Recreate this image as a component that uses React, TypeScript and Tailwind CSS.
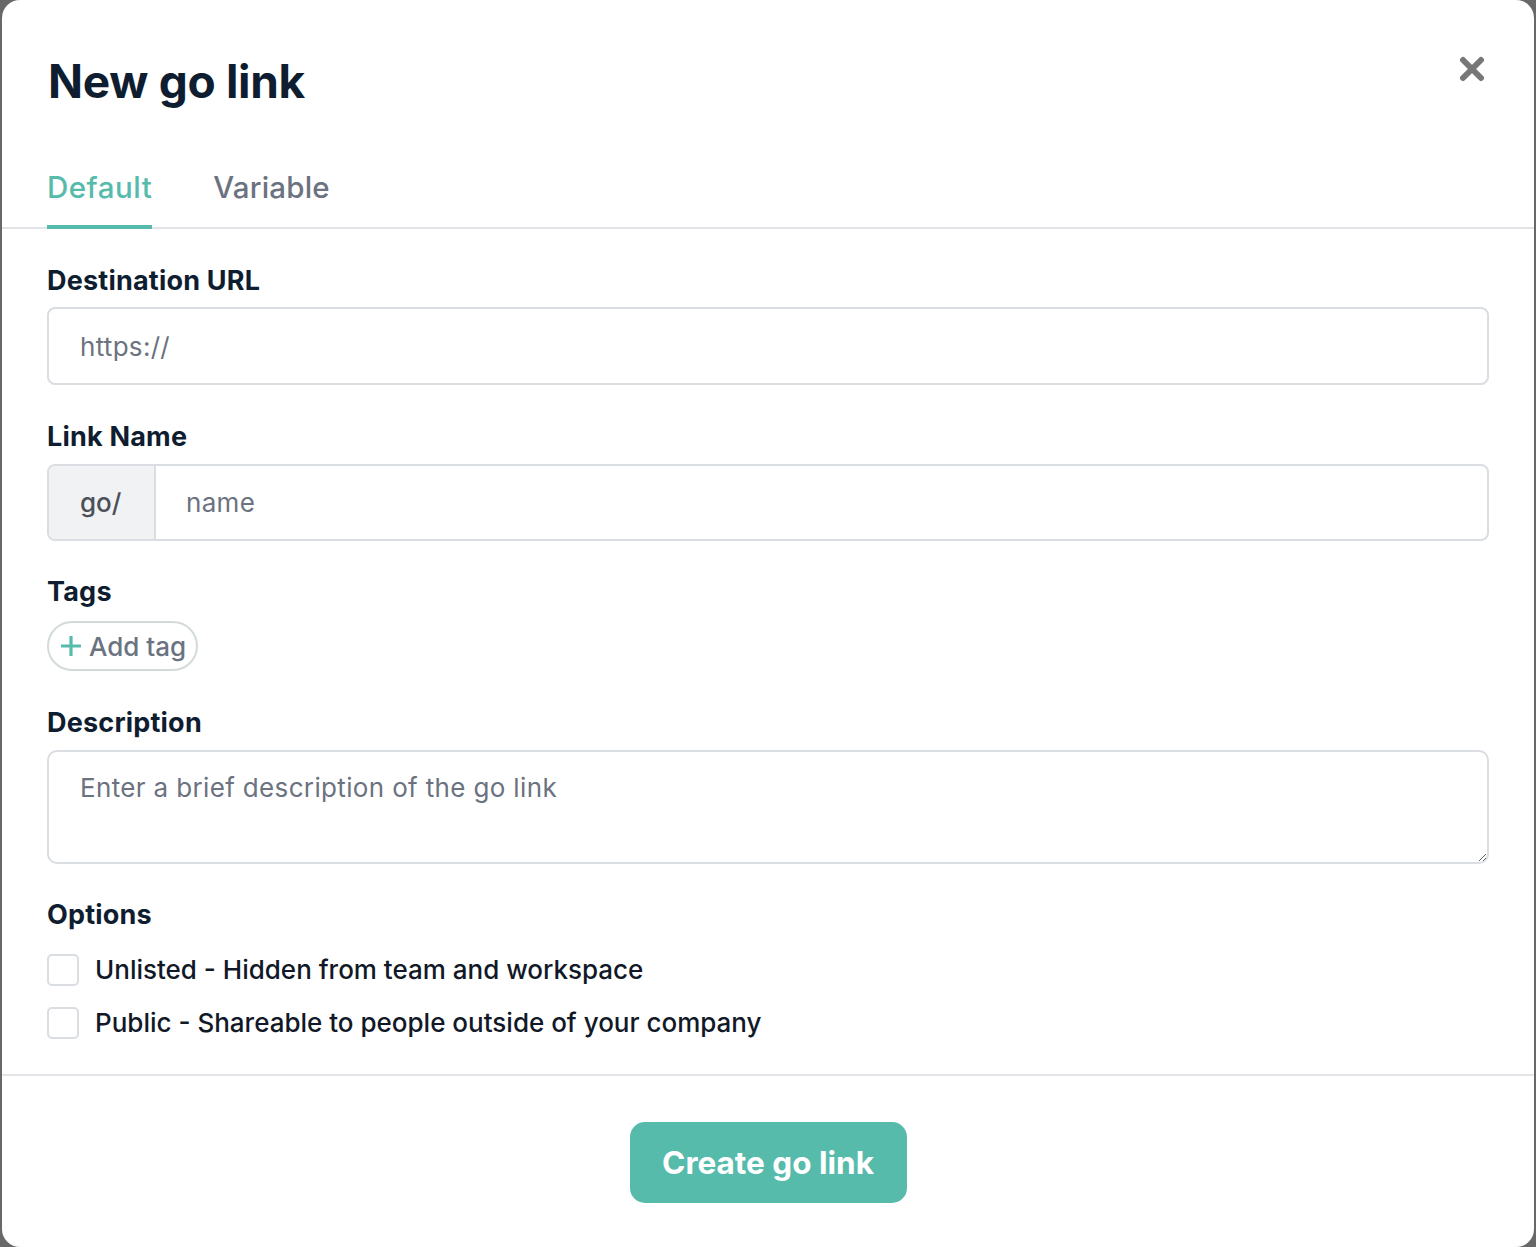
import React from 'react';

const FONT = "font-['Inter','Noto_Sans',sans-serif]";

function CloseIcon() {
  return (
    <svg width="26" height="26" viewBox="0 0 26 26" aria-hidden>
      <line x1="4" y1="4" x2="22" y2="22" stroke="#777777" strokeWidth="6" strokeLinecap="round" />
      <line x1="22" y1="4" x2="4" y2="22" stroke="#777777" strokeWidth="6" strokeLinecap="round" />
    </svg>
  );
}

function FieldLabel({ children }: { children: React.ReactNode }) {
  return (
    <label className="block text-[27px] leading-[32px] font-bold text-[#0f1d30] tracking-[0.2px]">
      {children}
    </label>
  );
}

function Option({ label }: { label: string }) {
  return (
    <label className="flex items-center gap-[16px]">
      <span className="w-[32px] h-[32px] rounded-[5px] border-2 border-[#dadde1] bg-white shrink-0" />
      <span className="text-[26px] leading-[32px] font-medium text-[#111827]">{label}</span>
    </label>
  );
}

export default function App() {
  return (
    <div className={`${FONT} bg-[#686868] h-[1247px] w-full`}>
      <div className="mx-[2px] h-full bg-white rounded-[18px] flex flex-col overflow-hidden">
        {/* Header */}
        <div className="flex justify-between items-start pl-[46px] pr-[48px] pt-[53px]">
          <h1 className="text-[46px] leading-[56px] font-bold text-[#0f1d30] tracking-[-0.3px]">New go link</h1>
          <button className="mt-[3px] mr-[1px]">
            <CloseIcon />
          </button>
        </div>

        {/* Tabs */}
        <div className="mt-[60px] flex gap-[61px] px-[45px] border-b-2 border-[#e3e3e8]">
          <button className="-mb-[2px] pb-[20px] border-b-4 border-[#57bbac] text-[29.5px] leading-[36px] font-medium text-[#57bbac] tracking-[0.5px]">
            Default
          </button>
          <button className="-mb-[2px] pb-[20px] border-b-4 border-transparent text-[29.5px] leading-[36px] font-medium text-[#6b7280] tracking-[0.2px]">
            Variable
          </button>
        </div>

        {/* Body */}
        <div className="px-[45px] pt-[36px] flex flex-col">
          <FieldLabel>Destination URL</FieldLabel>
          <input
            className="mt-[10px] h-[78px] w-full rounded-[8px] border-2 border-[#dadde1] px-[31px] text-[26px] tracking-[0.3px] text-[#111827] placeholder:text-[#6b7280] outline-none"
            placeholder="https://"
          />

          <div className="mt-[36px]">
            <FieldLabel>Link Name</FieldLabel>
          </div>
          <div className="mt-[11px] h-[77px] flex rounded-[8px] border-2 border-[#dadde1] overflow-hidden">
            <span className="w-[107px] shrink-0 flex items-center pl-[31px] bg-[#f1f2f4] border-r-2 border-[#dadde1] text-[26px] font-medium text-[#4b5058]">
              go/
            </span>
            <input
              className="flex-1 px-[30px] text-[26px] tracking-[0.3px] text-[#111827] placeholder:text-[#6b7280] outline-none"
              placeholder="name"
            />
          </div>

          <div className="mt-[35px]">
            <FieldLabel>Tags</FieldLabel>
          </div>
          <div className="mt-[13px]">
            <button className="h-[50px] w-[151px] flex items-center gap-[8px] pl-[12px] rounded-full border-2 border-[#d3dbd9] text-[26px] font-medium text-[#6b7280]">
              <svg width="20" height="20" viewBox="0 0 20 20" aria-hidden>
                <line x1="10" y1="1" x2="10" y2="19" stroke="#57bbac" strokeWidth="3.2" strokeLinecap="round" />
                <line x1="1" y1="10" x2="19" y2="10" stroke="#57bbac" strokeWidth="3.2" strokeLinecap="round" />
              </svg>
              Add tag
            </button>
          </div>

          <div className="mt-[36px]">
            <FieldLabel>Description</FieldLabel>
          </div>
          <textarea
            className="mt-[11px] h-[114px] w-full rounded-[10px] border-2 border-[#dadde1] px-[31px] pt-[20px] text-[26px] leading-[32px] tracking-[0.35px] text-[#111827] placeholder:text-[#6b7280] outline-none"
            placeholder="Enter a brief description of the go link"
          />

          <div className="mt-[35px]">
            <FieldLabel>Options</FieldLabel>
          </div>
          <div className="mt-[23px] flex flex-col gap-[21px]">
            <Option label="Unlisted - Hidden from team and workspace" />
            <Option label="Public - Shareable to people outside of your company" />
          </div>
        </div>

        {/* Footer */}
        <div className="mt-[35px] border-t-2 border-[#e3e3e8] flex justify-center pt-[46px]">
          <button className="h-[81px] w-[277px] rounded-[15px] bg-[#57bbac] text-white text-[31.5px] font-bold">
            Create go link
          </button>
        </div>
      </div>
    </div>
  );
}
